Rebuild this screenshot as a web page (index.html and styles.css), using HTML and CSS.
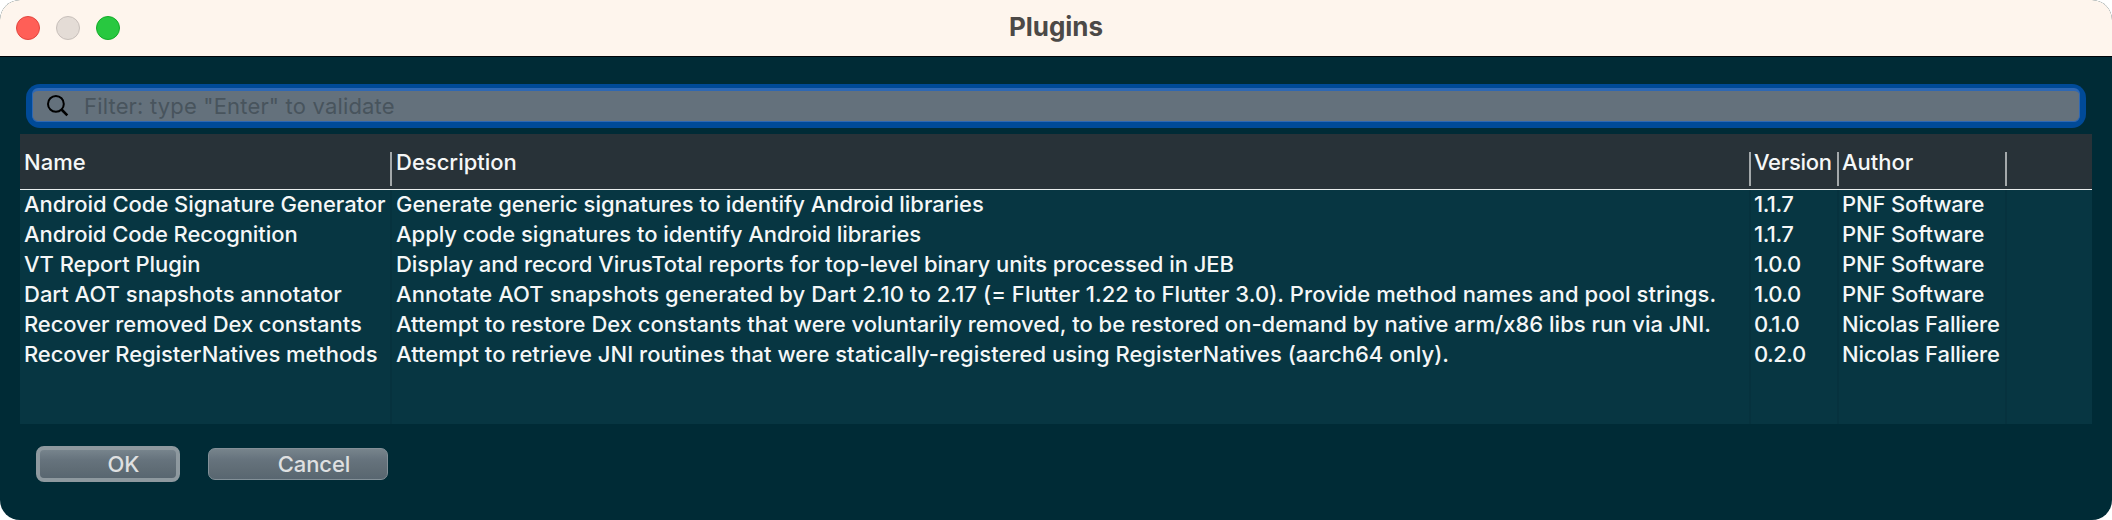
FILE: index.html
```html
<!DOCTYPE html>
<html lang="en">
<head>
<meta charset="utf-8">
<title>Plugins</title>
<link rel="stylesheet" href="styles.css">
</head>
<body>
<div class="window">
  <header class="titlebar">
    <div class="lights"><i class="light close"></i><i class="light minimize"></i><i class="light maximize"></i></div>
    <h1 class="title">Plugins</h1>
  </header>
  <main class="content">
    <div class="search">
      <div class="search-field">
        <svg class="search-icon" viewBox="0 0 22 22" width="22" height="22"><circle cx="8.9" cy="8.9" r="7.9"/><path d="M14.5 14.5L20.3 20.3"/></svg>
        <span class="placeholder">Filter: type "Enter" to validate</span>
      </div>
    </div>
    <div class="table">
      <div class="head">
        <span class="cell">Name</span><span class="cell">Description</span><span class="cell version">Version</span><span class="cell by">Author</span><span class="cell"></span>
      </div>
      <div class="body">
        <div class="column name"><span class="n1">Android Code Signature Generator</span><span class="n2">Android Code Recognition</span><span class="n3">VT Report Plugin</span><span class="n4">Dart AOT snapshots annotator</span><span class="n5">Recover removed Dex constants</span><span class="n6">Recover RegisterNatives methods</span></div>
        <div class="column desc"><span class="d1">Generate generic signatures to identify Android libraries</span><span class="d2">Apply code signatures to identify Android libraries</span><span class="d3">Display and record VirusTotal reports for top-level binary units processed in JEB</span><span class="d4">Annotate AOT snapshots generated by Dart 2.10 to 2.17 (= Flutter 1.22 to Flutter 3.0). Provide method names and pool strings.</span><span class="d5">Attempt to restore Dex constants that were voluntarily removed, to be restored on-demand by native arm/x86 libs run via JNI.</span><span class="d6">Attempt to retrieve JNI routines that were statically-registered using RegisterNatives (aarch64 only).</span></div>
        <div class="column ver"><span>1.1.7</span><span>1.1.7</span><span>1.0.0</span><span>1.0.0</span><span>0.1.0</span><span>0.2.0</span></div>
        <div class="column author"><span>PNF Software</span><span>PNF Software</span><span>PNF Software</span><span>PNF Software</span><span class="nf">Nicolas Falliere</span><span class="nf">Nicolas Falliere</span></div>
        <div class="column"></div>
      </div>
    </div>
    <div class="actions">
      <button class="button ok">OK</button>
      <button class="button cancel">Cancel</button>
    </div>
  </main>
</div>
</body>
</html>
```

FILE: styles.css
```css
* { box-sizing: border-box; }
body { margin: 0; background: #fff; font-family: Inter, "Liberation Sans", sans-serif; font-size: 22px; }
.window { height: 520px; border-radius: 20px; overflow: hidden; background: #002b36; display: flex; flex-direction: column; }
.titlebar { height: 57px; flex: none; background: #fef5ed; border-bottom: 1px solid #000509; display: grid; grid-template-columns: 1fr auto 1fr; align-items: center; }
.lights { display: flex; gap: 16px; padding-left: 16px; }
.light { width: 24px; height: 24px; border-radius: 50%; border: 1px solid; }
.close { background: #ff5f57; border-color: #e2463f; }
.minimize { background: #e4dcd6; border-color: #c7bfba; }
.maximize { background: #28c840; border-color: #12ac28; }
.title { margin: 0; font-size: 26px; line-height: 32px; font-weight: 700; color: #4c4947; letter-spacing: -0.05px; position: relative; top: -1px; }
.content { padding: 27px 20px 0; }
.search { margin: 0 6px; height: 44px; border-radius: 14px; background: #004a98; padding: 4px 6px 6px; }
.search-field { height: 34px; border: 1px solid #2e68b4; border-top-width: 3px; border-radius: 6px; background: #64717c; display: flex; align-items: center; padding-left: 14px; }
.search-icon { fill: none; stroke: #000; stroke-width: 2; }
.search-icon path { stroke-width: 2.6; }
.placeholder { margin-left: 15px; color: #48545d; line-height: 28px; letter-spacing: 0.17px; }
.table { margin-top: 6px; height: 290px; display: flex; flex-direction: column; background: #073642; color: #f5f7f7; font-weight: 500; }
.head, .body { display: grid; grid-template-columns: 372px 1359px 88px 168px 85px; }
.head { height: 56px; background: #283238; border-bottom: 1px solid #e9eded; padding-top: 18px; }
.head .cell { height: 34px; line-height: 20px; padding-left: 4px; border-right: 2px solid #a3a8aa; white-space: nowrap; }
.head .version { letter-spacing: -0.3px; }
.head .version, .head .by { padding-left: 3px; }
.head .cell:last-child { border-right: 0; }
.body { flex: 1; }
.column { padding-left: 4px; border-right: 2px solid #06323e; display: flex; flex-direction: column; }
.column:last-child { border-right: 0; }
.column span { height: 30px; line-height: 28px; white-space: nowrap; align-self: flex-start; }
.ver, .author { padding-left: 3px; }
.ver { letter-spacing: -0.5px; }
.author { letter-spacing: -0.16px; }
.author .nf { letter-spacing: -0.1px; }
.n1, .n3 { letter-spacing: -0.04px; }
.n2, .n5, .n6 { letter-spacing: -0.08px; }
.d1, .d2, .d3 { letter-spacing: -0.03px; }
.d4 { letter-spacing: 0.08px; }
.d6 { letter-spacing: 0.02px; }
.actions { display: flex; align-items: center; gap: 28px; padding: 22px 0 0 16px; }
.button { font: inherit; font-weight: 500; color: #dfe0e1; padding: 0; border: 1px solid #8e999f; border-radius: 7px; background: linear-gradient(#77848c 0, #66737d 35%, #606d76 65%, #586670 100%); }
.ok { width: 144px; height: 36px; border: 4px solid #8e999f; border-radius: 8px; padding-left: 31px; }
.cancel { width: 180px; height: 32px; border-color: #839098; padding-left: 32px; letter-spacing: -0.1px; }
```
